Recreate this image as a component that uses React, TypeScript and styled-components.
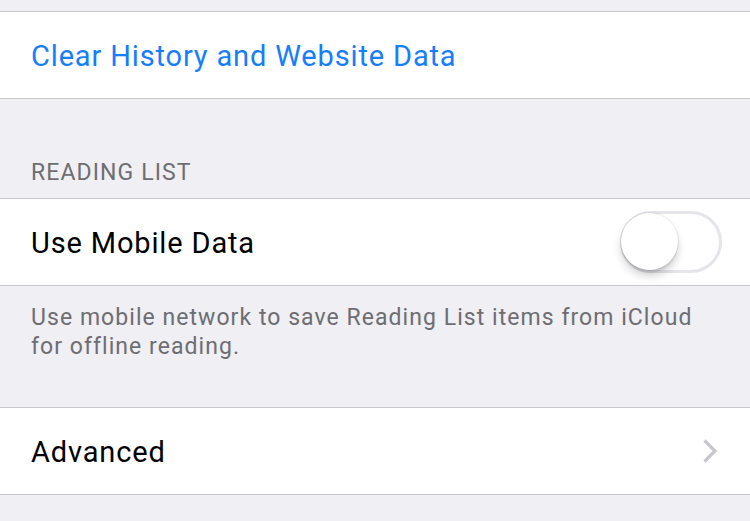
import * as React from 'react';
import styled, { createGlobalStyle } from 'styled-components';

const GlobalStyle = createGlobalStyle`
  html, body {
    margin: 0;
    padding: 0;
    background: #efeff4;
  }
  body {
    font-family: Roboto, "Liberation Sans", sans-serif;
    -webkit-font-smoothing: antialiased;
  }
`;

const Page = styled.div`
  width: 750px;
  height: 521px;
  overflow: hidden;
  background: #efeff4;
  padding-top: 11px;
  box-sizing: border-box;
`;

const Group = styled.div`
  background: #fff;
  border-top: 1px solid #c8c7cc;
  border-bottom: 1px solid #c8c7cc;
`;

const Row = styled.div`
  height: 86px;
  display: flex;
  align-items: center;
  justify-content: space-between;
  padding: 0 30px 0 31px;
`;

const Label = styled.span<{ $tone?: 'blue' | 'black' }>`
  font-size: 29px;
  color: ${(p) => (p.$tone === 'blue' ? '#167efb' : '#000')};
  letter-spacing: 0.85px;
  margin-top: 2px;
`;

const Header = styled.div`
  height: 99px;
  box-sizing: border-box;
  display: flex;
  align-items: flex-end;
  padding: 0 31px 12px;
  font-size: 23px;
  color: #6d6d72;
  letter-spacing: 1.1px;
`;

const Footer = styled.div`
  height: 121px;
  box-sizing: border-box;
  padding: 17px 31px 0;
  font-size: 23px;
  line-height: 29px;
  color: #6d6d72;
  letter-spacing: 1.05px;
`;

const Switch = styled.div<{ $on?: boolean }>`
  width: 102px;
  height: 62px;
  border-radius: 31px;
  box-sizing: border-box;
  border: 3px solid #e5e5ea;
  background: ${(p) => (p.$on ? '#4cd964' : '#fff')};
  position: relative;
  margin-right: -2px;
`;

const Knob = styled.div`
  position: absolute;
  left: -2px;
  top: -1px;
  width: 57px;
  height: 57px;
  border-radius: 50%;
  background: #fff;
  box-shadow: 0 6px 8px rgba(0, 0, 0, 0.18), 0 0 0 1px rgba(0, 0, 0, 0.06),
    0 3px 1px rgba(0, 0, 0, 0.06);
`;

const Chevron = () => (
  <svg width="16" height="26" viewBox="0 0 16 26" style={{ marginRight: 2 }}>
    <path d="M2.5 2.5 L13 13 L2.5 23.5" fill="none" stroke="#c7c7cc" strokeWidth="3.2" />
  </svg>
);

export default function App() {
  return (
    <Page>
      <GlobalStyle />
      <Group>
        <Row>
          <Label $tone="blue">Clear History and Website Data</Label>
        </Row>
      </Group>
      <Header>READING LIST</Header>
      <Group>
        <Row>
          <Label>Use Mobile Data</Label>
          <Switch>
            <Knob />
          </Switch>
        </Row>
      </Group>
      <Footer>
        Use mobile network to save Reading List items from iCloud
        <br />
        for offline reading.
      </Footer>
      <Group>
        <Row>
          <Label>Advanced</Label>
          <Chevron />
        </Row>
      </Group>
    </Page>
  );
}
